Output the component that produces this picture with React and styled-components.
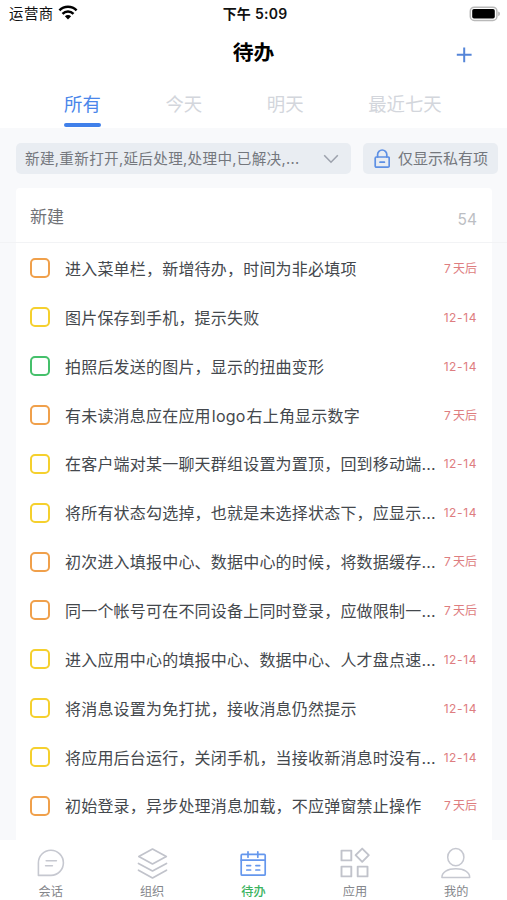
import React from 'react';
import styled, { createGlobalStyle } from 'styled-components';

const GlobalStyle = createGlobalStyle`
  * {
    box-sizing: border-box;
  }
  body {
    margin: 0;
    background: #f8f9fb;
    font-family: Inter, "Noto Sans CJK SC", sans-serif;
    -webkit-font-smoothing: antialiased;
  }
`

const ORANGE = '#f0a04b';
const YELLOW = '#f5d02e';
const GREEN = '#45c06b';

const tabs = ['所有', '今天', '明天', '最近七天'];

const todos = [
  { title: '进入菜单栏，新增待办，时间为非必填项', date: '7 天后', color: ORANGE },
  { title: '图片保存到手机，提示失败', date: '12-14', color: YELLOW },
  { title: '拍照后发送的图片，显示的扭曲变形', date: '12-14', color: GREEN },
  { title: '有未读消息应在应用logo右上角显示数字', date: '7 天后', color: ORANGE },
  { title: '在客户端对某一聊天群组设置为置顶，回到移动端...', date: '12-14', color: YELLOW },
  { title: '将所有状态勾选掉，也就是未选择状态下，应显示...', date: '12-14', color: YELLOW },
  { title: '初次进入填报中心、数据中心的时候，将数据缓存...', date: '7 天后', color: ORANGE },
  { title: '同一个帐号可在不同设备上同时登录，应做限制一...', date: '7 天后', color: ORANGE },
  { title: '进入应用中心的填报中心、数据中心、人才盘点速...', date: '12-14', color: YELLOW },
  { title: '将消息设置为免打扰，接收消息仍然提示', date: '12-14', color: YELLOW },
  { title: '将应用后台运行，关闭手机，当接收新消息时没有...', date: '12-14', color: YELLOW },
  { title: '初始登录，异步处理消息加载，不应弹窗禁止操作', date: '7 天后', color: ORANGE },
];

const ChatIcon = () => (
  <svg width="32" height="32" viewBox="0 0 32 32" fill="none" stroke="#c6c8d0" strokeWidth="1.6" strokeLinecap="round" strokeLinejoin="round">
    <path d="M3.4 28.4V15.9A12.5 12.6 0 1 1 16 28.4z" />
    <path d="M11.2 13.8h10.2M10.6 18.7h6.8" />
  </svg>
)

const LayersIcon = () => (
  <svg width="32" height="32" viewBox="0 0 32 32" fill="none" stroke="#c1c3cb" strokeWidth="1.7" strokeLinejoin="round" strokeLinecap="round">
    <path d="M16.5 2 30.3 9.6 16.5 17 2.8 9.6z" />
    <path d="M2.5 16.5 16.5 24 30.5 16.5" />
    <path d="M2.5 23.2 16.5 31 30.5 23.2" />
  </svg>
)

const CalendarIcon = () => (
  <svg width="32" height="32" viewBox="0 0 32 32" fill="none" stroke="#6597ed" strokeWidth="1.7" strokeLinecap="round" strokeLinejoin="round">
    <rect x="4.2" y="7.4" width="24" height="20.8" rx="1" />
    <path d="M4.2 13.2h24M11 4.8v5.4M20.8 4.8v5.4M9.8 18.6h3.8M9.8 23h3.8M18.9 18.6h3.8M18.9 23h3.8" />
  </svg>
)

const AppsIcon = () => (
  <svg width="32" height="32" viewBox="0 0 32 32" fill="none" stroke="#c1c3cb" strokeWidth="1.9" strokeLinejoin="round">
    <rect x="2.5" y="3.6" width="9.8" height="9.8" />
    <rect x="2.5" y="19.6" width="9.8" height="9.8" />
    <rect x="18.7" y="19.6" width="9.8" height="9.8" />
    <path d="M23.2 1.6 29.8 8.2 23.2 14.8 16.6 8.2z" />
  </svg>
)

const PersonIcon = () => (
  <svg width="32" height="32" viewBox="0 0 32 32" fill="none" stroke="#c6c8d0" strokeWidth="1.5" strokeLinejoin="round">
    <ellipse cx="15.8" cy="10.2" rx="8.1" ry="8.6" />
    <path d="M1.9 30.4c0-5.4 5.6-8.6 13.9-8.6s13.9 3.2 13.9 8.6z" />
  </svg>
)

const menu = [
  { name: '会话', icon: <ChatIcon /> },
  { name: '组织', icon: <LayersIcon /> },
  { name: '待办', icon: <CalendarIcon />, active: true },
  { name: '应用', icon: <AppsIcon /> },
  { name: '我的', icon: <PersonIcon /> },
];

// latin words get a little air next to the chinese characters
const renderTitle = (title) =>
  title.split(/([a-z]+)/).map((part, i) => (
    i % 2 ? <Latin key={i}>{part}</Latin> : part
  ))

function App() {
  return (
    <Screen>
      <GlobalStyle />
      <Header>
        <StatusBar>
          <Carrier>
            运营商
            <svg width="20" height="15" viewBox="0 0 20 15" fill="none" stroke="#000" strokeWidth="2.5">
              <path d="M1.4 5.3a12.2 12.2 0 0 1 17.2 0" />
              <path d="M4.5 8.8a7.8 7.8 0 0 1 11 0" />
              <path d="M6.9 11.3a4.4 4.4 0 0 1 6.2 0L10 14.4z" fill="#000" stroke="none" />
            </svg>
          </Carrier>
          <Clock>下午 5:09</Clock>
          <Battery>
            <svg width="32" height="16" viewBox="0 0 32 16">
              <rect x="1.3" y="1.2" width="26.6" height="13.2" rx="4" fill="#fff" stroke="#b9b9b9" strokeWidth="1.5" />
              <rect x="3.2" y="3" width="22.6" height="9.6" rx="1.8" fill="#000" />
              <path d="M29.2 5.4a2.5 2.5 0 0 1 0 4.8z" fill="#b5b5b5" />
            </svg>
          </Battery>
        </StatusBar>
        <NavBar>
          <Title>待办</Title>
          <AddButton aria-label="新增">
            <svg width="16" height="16" viewBox="0 0 16 16" stroke="#5585d8" strokeWidth="2">
              <path d="M8.2 .4v14.8M.8 7.8h14.8" />
            </svg>
          </AddButton>
        </NavBar>
        <Tabs>
          {tabs.map((tab, i) => (
            <Tab key={tab} $active={i === 0}>{tab}</Tab>
          ))}
        </Tabs>
      </Header>

      <Filters>
        <StatusFilter>
          <span>新建,重新打开,延后处理,处理中,已解决,...</span>
          <svg width="16" height="10" viewBox="0 0 16 10" fill="none" stroke="#9da2ad" strokeWidth="1.6">
            <path d="M1.2 1.3 8 8.2l6.8-6.9" />
          </svg>
        </StatusFilter>
        <PrivateFilter>
          <svg width="16" height="20" viewBox="0 0 16 20" fill="none" stroke="#5e90e4" strokeWidth="1.7" strokeLinecap="round">
            <rect x="1.2" y="8" width="14" height="10.2" rx="1.2" />
            <path d="M3.6 8V5.6a4.6 4.6 0 0 1 9.2 0V8M6 13.2h4.4" />
          </svg>
          仅显示私有项
        </PrivateFilter>
      </Filters>

      <Group>
        <GroupHeader>
          <GroupName>新建</GroupName>
          <Count>54</Count>
        </GroupHeader>
      </Group>
      <Divider />
      <List>
        {todos.map(todo => (
          <Row key={todo.title}>
            <Checkbox $color={todo.color} />
            <RowTitle>{renderTitle(todo.title)}</RowTitle>
            <DueDate $spaced={todo.date.includes('-')}>{todo.date}</DueDate>
          </Row>
        ))}
      </List>

      <TabBar>
        {menu.map(item => (
          <MenuItem key={item.name} $active={item.active}>
            {item.icon}
            {item.name}
          </MenuItem>
        ))}
      </TabBar>
    </Screen>
  );
}

export default App;

const Screen = styled.div`
  display: flex;
  flex-direction: column;
  height: 900px;
  overflow: hidden;
  background: #f8f9fb;
`

const Header = styled.header`
  flex: none;
  height: 128px;
  background: #fff;
`

const StatusBar = styled.div`
  display: grid;
  grid-template-columns: 1fr auto 1fr;
  align-items: center;
  height: 27px;
  padding: 0 6px 0 9px;
  color: #111;
`

const Carrier = styled.div`
  display: flex;
  align-items: center;
  gap: 4px;
  font-size: 14.4px;
  line-height: 20px;
  letter-spacing: 0.5px;
  svg {
    margin-top: -2px;
  }
`

const Clock = styled.div`
  font-size: 14px;
  font-weight: 600;
  line-height: 20px;
  letter-spacing: 0.25px;
`

const Battery = styled.div`
  display: flex;
  justify-content: flex-end;
`

const NavBar = styled.div`
  display: grid;
  grid-template-columns: 1fr auto 1fr;
  align-items: center;
  height: 52px;
  padding-right: 35px;
  padding-left: 35px;
`

const Title = styled.h1`
  grid-column: 2;
  margin: 0;
  font-size: 20.8px;
  font-weight: 600;
  line-height: 30px;
  color: #000;
`

const AddButton = styled.button`
  display: flex;
  justify-self: end;
  padding: 4px 0 0;
  border: 0;
  background: none;
`

const Tabs = styled.nav`
  display: flex;
  gap: 64.6px;
  height: 49px;
  padding-left: 64px;
`

const Tab = styled.div`
  padding-top: 10px;
  font-size: 18.4px;
  line-height: 30px;
  color: ${props => props.$active ? '#4a86ea' : '#d3d6dc'};

  &::after {
    content: '';
    display: block;
    height: 4px;
    margin-top: 4px;
    border-radius: 2px;
    background: ${props => props.$active ? '#4080ea' : 'transparent'};
  }
`

const Filters = styled.div`
  display: flex;
  gap: 12px;
  flex: none;
  padding: 15px 9px 14px 16px;
`

const Filter = styled.div`
  display: flex;
  align-items: center;
  height: 31px;
  border-radius: 5px;
  background: #e9edf2;
  font-size: 14.6px;
  line-height: 22px;
  color: #74777d;
  white-space: nowrap;
`

const StatusFilter = styled(Filter)`
  flex: 1;
  justify-content: space-between;
  padding: 0 12px 0 9px;
  letter-spacing: 0.31px;
`

const PrivateFilter = styled(Filter)`
  gap: 8px;
  width: 135px;
  padding-left: 11px;
  font-size: 15px;
`

const Group = styled.section`
  flex: none;
  margin: 0 15px 0 16px;
  border-radius: 4px 4px 0 0;
  background: #fff;
`

const GroupHeader = styled.div`
  display: flex;
  justify-content: space-between;
  height: 54px;
  padding: 16px 15px 0 14px;
`

const GroupName = styled.div`
  font-size: 17px;
  line-height: 26px;
  color: #707277;
`

const Count = styled.div`
  padding-top: 3px;
  font-size: 15.5px;
  line-height: 26px;
  color: #bcbec3;
`

const Divider = styled.div`
  flex: none;
  height: 1px;
  background: #f2f3f5;
`

const List = styled.ul`
  flex: 1;
  min-height: 0;
  margin: 0 15px 0 16px;
  padding: 1px 0 0;
  overflow: hidden;
  background: #fff;
  list-style: none;
`

const Row = styled.li`
  display: flex;
  align-items: center;
  height: 48.87px;
  padding: 0 15px 0 14px;
`

const Checkbox = styled.span`
  flex: none;
  width: 20px;
  height: 20px;
  margin-right: 15px;
  border: 2px solid ${props => props.$color};
  border-radius: 5px;
`

const RowTitle = styled.span`
  flex: 1;
  padding-top: 1px;
  font-size: 16px;
  line-height: 24px;
  letter-spacing: 0.2px;
  color: #44484d;
  white-space: nowrap;
`

const Latin = styled.span`
  margin: 0 1px;
`

const DueDate = styled.span`
  padding-top: 1px;
  font-size: 12px;
  line-height: 18px;
  letter-spacing: ${props => props.$spaced ? '0.6px' : '0'};
  word-spacing: -1.2px;
  color: #de7d80;
  white-space: nowrap;
`

const TabBar = styled.footer`
  display: grid;
  grid-template-columns: repeat(5, 1fr);
  flex: none;
  height: 60px;
  padding-top: 7px;
  background: #fff;
`

const MenuItem = styled.div`
  display: flex;
  flex-direction: column;
  align-items: center;
  font-size: 12.2px;
  font-weight: ${props => props.$active ? 500 : 400};
  line-height: 18px;
  color: ${props => props.$active ? '#3bb35f' : '#85878c'};
  svg {
    margin-bottom: 4px;
  }
`
